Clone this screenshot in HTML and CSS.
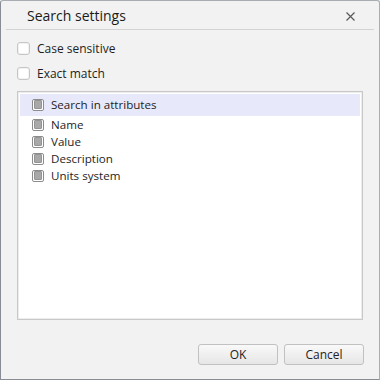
FILE: index.html
```html
<!DOCTYPE html>
<html>
<head>
<meta charset="utf-8">
<link rel="stylesheet" href="styles.css">
</head>
<body>
<div class="dialog">
  <div class="header">
    <span class="title">Search settings</span>
    <span class="close"><svg width="9" height="9" viewBox="0 0 9 9"><path d="M0.5 0.5 L8.5 8.5 M8.5 0.5 L0.5 8.5" stroke="#5a5a5a" stroke-width="1.2" fill="none"/></svg></span>
  </div>
  <div class="body">
    <label class="opt"><span class="cb"></span><span>Case sensitive</span></label>
    <label class="opt"><span class="cb"></span><span>Exact match</span></label>
    <div class="list">
      <div class="row head"><span class="tcb"><span class="tcb-in"></span></span><span>Search in attributes</span></div>
      <div class="row"><span class="tcb"><span class="tcb-in"></span></span><span>Name</span></div>
      <div class="row"><span class="tcb"><span class="tcb-in"></span></span><span>Value</span></div>
      <div class="row"><span class="tcb"><span class="tcb-in"></span></span><span>Description</span></div>
      <div class="row"><span class="tcb"><span class="tcb-in"></span></span><span>Units system</span></div>
    </div>
  </div>
  <div class="footer">
    <button class="btn">OK</button>
    <button class="btn">Cancel</button>
  </div>
</div>
</body>
</html>
```
FILE: styles.css
```css
html, body {
  margin: 0;
  padding: 0;
  background: #f2f2f2;
}
body {
  font-family: "Open Sans", "Noto Sans", sans-serif;
  font-size: 12px;
  color: #1e1e1e;
}
.dialog {
  box-sizing: border-box;
  width: 380px;
  height: 380px;
  background: #f2f2f2;
  border: 1px solid #a9adb3;
  border-left-color: #888d95;
  border-bottom-color: #888d95;
  border-radius: 3px 3px 0 0;
  display: flex;
  flex-direction: column;
}
.header {
  height: 28px;
  margin: 0 5px;
  border-bottom: 1px solid #d3d3d3;
  display: flex;
  align-items: center;
  justify-content: space-between;
  padding: 0 19px 0 21px;
}
.title {
  font-size: 14px;
  color: #1a1a1a;
  padding-top: 1px;
}
.close {
  display: flex;
  padding-top: 2px;
}
.body {
  padding: 12px 16px 0 16px;
  display: flex;
  flex-direction: column;
}
.opt {
  display: flex;
  align-items: center;
  height: 13px;
  margin-bottom: 12px;
  gap: 7px;
}
.opt + .opt {
  margin-bottom: 11px;
}
.cb {
  box-sizing: border-box;
  width: 13px;
  height: 13px;
  border: 1px solid #c6c6c6;
  border-radius: 3px;
  background: #fff;
  box-shadow: inset 0 0 0 1px #f2f2f2;
}
.list {
  box-sizing: border-box;
  height: 229px;
  background: #fff;
  border: 1px solid #c8c8c8;
  box-shadow: inset 0 0 0 1px #ececec;
  padding: 2px;
  font-size: 11.6px;
}
.row {
  display: flex;
  align-items: center;
  height: 17px;
  padding-left: 12px;
  gap: 7px;
}
.row span:last-child {
  margin-top: -1px;
}
.row.head {
  height: 22px;
  background: #e8e8fb;
  margin-bottom: 0;
}
.tcb {
  box-sizing: border-box;
  width: 12px;
  height: 12px;
  border: 1px solid #8c8c8c;
  border-radius: 2px;
  background: #fff;
  padding: 1px;
  display: flex;
}
.tcb-in {
  flex: 1;
  background: #a8a8a8;
  border: 1px solid #949494;
  border-radius: 1px;
}
.footer {
  margin-top: 24px;
  display: flex;
  justify-content: flex-end;
  gap: 6px;
  padding-right: 15px;
}
.btn {
  box-sizing: border-box;
  width: 80px;
  height: 21px;
  border: 1px solid #c1c1c1;
  border-radius: 3px;
  background: linear-gradient(#f9f9f9, #e6e6e6);
  font-family: "Open Sans", "Noto Sans", sans-serif;
  font-size: 12px;
  color: #222;
  padding: 0;
  line-height: 19px;
}
```
